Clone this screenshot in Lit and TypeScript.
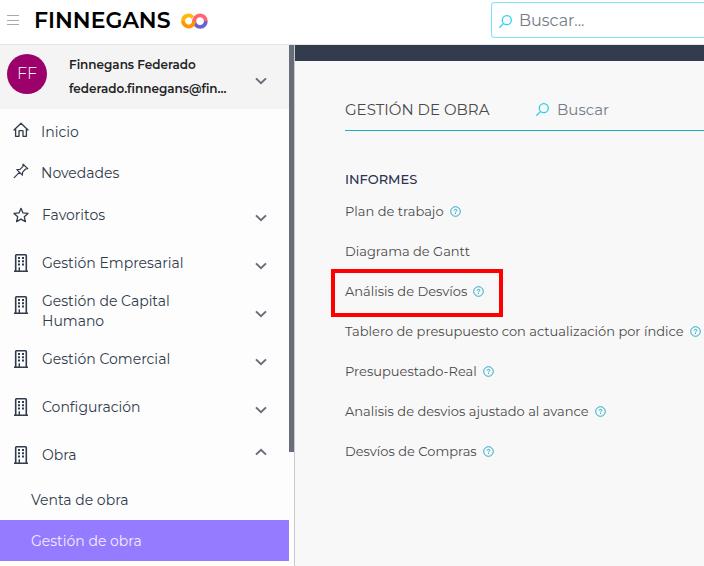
import { LitElement, html, css, svg, nothing } from "lit";
import { customElement } from "lit/decorators.js";
import { classMap } from "lit/directives/class-map.js";

const home = svg`<svg class="icon" width="16" height="16" viewBox="0 0 16 16" fill="none" stroke="currentColor" stroke-width="1.3" stroke-linejoin="round" stroke-linecap="round" aria-hidden="true"><path d="M1 8 L8 1.2 L15 8 M2.6 6.8 V14.3 H6 V9.2 Q6 8.6 6.6 8.6 H9.4 Q10 8.6 10 9.2 V14.3 H13.4 V6.8"/></svg>`;
const pin = svg`<svg class="icon" width="16" height="16" viewBox="0 0 16 16" fill="none" stroke="currentColor" stroke-width="1.2" stroke-linejoin="round" stroke-linecap="round" aria-hidden="true"><path d="M10 1.2 L14.8 5.6 L12.6 6 L9.6 9.2 L9.4 12.2 L3.8 6.6 L7 6.4 L10 3.4 Z M6.4 9.4 L1.2 14.6"/></svg>`;
const star = svg`<svg class="icon" width="16" height="16" viewBox="0 0 16 16" fill="none" stroke="currentColor" stroke-width="1.3" stroke-linejoin="round" aria-hidden="true"><path d="M8 1.3 L10 5.9 L15 6.4 L11.3 9.8 L12.4 14.6 L8 12.1 L3.6 14.6 L4.7 9.8 L1 6.4 L6 5.9 Z"/></svg>`;
const building = svg`<svg class="icon" width="16" height="18" viewBox="0 0 16 18" aria-hidden="true"><path d="M1 17.2 H15 M2.7 17 V1.6 Q2.7 .8 3.5 .8 H12.5 Q13.3 .8 13.3 1.6 V17" fill="none" stroke="currentColor" stroke-width="1.6"/><path d="M5 3h2v2H5z M9 3h2v2H9z M5 6.2h2v2H5z M9 6.2h2v2H9z M5 9.4h2v2H5z M9 9.4h2v2H9z M5.6 13.2h1.4v4H5.6z" fill="currentColor"/></svg>`;

const chevron = (up = false) => svg`<svg class="chevron ${up ? "up" : ""}" width="12" height="8" viewBox="0 0 12 8" fill="none" stroke="currentColor" stroke-width="2" aria-hidden="true"><path d="M1 1.4 L6 6.2 L11 1.4"/></svg>`;
const lens = svg`<svg class="lens" width="13" height="13" viewBox="0 0 13 13" fill="none" stroke="currentColor" stroke-width="1.3" stroke-linecap="round" aria-hidden="true"><circle cx="7.8" cy="5.2" r="4.5"/><path d="M4.4 8.6 L.8 12.2"/></svg>`;
const help = svg`<svg width="11" height="11" viewBox="0 0 11 11" fill="none" stroke="currentColor" stroke-width="1" aria-hidden="true"><circle cx="5.5" cy="5.5" r="4.8"/><path d="M4.2 4.6 Q4.3 3.4 5.5 3.4 Q6.8 3.4 6.8 4.4 Q6.8 5.1 6 5.4 Q5.5 5.6 5.5 6.3 M5.5 7.1 V8"/></svg>`;

interface Entry {
  label: string;
  icon: unknown;
  tall?: boolean;
  open?: boolean;
}

const shortcuts: Entry[] = [
  { label: "Inicio", icon: home },
  { label: "Novedades", icon: pin },
];

const groups: Entry[] = [
  { label: "Favoritos", icon: star },
  { label: "Gestión Empresarial", icon: building },
  { label: "Gestión de Capital Humano", icon: building, tall: true },
  { label: "Gestión Comercial", icon: building },
  { label: "Configuración", icon: building },
  { label: "Obra", icon: building, open: true },
];

const reports = [
  { label: "Plan de trabajo", help: true },
  { label: "Diagrama de Gantt", help: false },
  { label: "Análisis de Desvíos", help: true, marked: true },
  { label: "Tablero de presupuesto con actualización por índice", help: true },
  { label: "Presupuestado-Real", help: true },
  { label: "Analisis de desvios ajustado al avance", help: true },
  { label: "Desvíos de Compras", help: true },
];

const base = css`
  :host, * { box-sizing: border-box; }
  button { font: inherit; color: inherit; background: none; border: 0; padding: 0; text-align: left; cursor: pointer; }
  a { color: inherit; text-decoration: none; }
  input { font: inherit; color: inherit; background: none; border: 0; padding: 0; outline: 0; min-width: 0; flex: 1; }
  input::placeholder { color: #747c88; opacity: 1; }
  svg { flex: none; display: block; }
  ul { list-style: none; margin: 0; padding: 0; }
`;

@customElement("top-bar")
export class TopBar extends LitElement {
  static styles = [base, css`
    :host { display: grid; grid-template-columns: 491px minmax(0, 1fr); height: 45px; background: #fff; border-bottom: 1px solid #e6e6e6; }
    .brand { display: flex; align-items: center; padding: 0 0 3px 7px; }
    .menu { color: #a9a9a9; margin-right: 15px; }
    .name { font-size: 22px; font-weight: 600; line-height: 28px; color: #000; }
    .rings { margin-left: 10px; }
    .search { display: flex; align-items: center; gap: 7px; height: 36px; margin-top: 2px; padding-left: 7px; border: 1px solid #7de3f8; border-right: 0; border-radius: 4px 0 0 4px; font-size: 16px; color: #747c88; }
    .lens { color: #2bcdf0; margin-top: 2px; }
  `];
  render() {
    return html`
      <div class="brand">
        <button class="menu" aria-label="Menú">
          <svg width="12" height="12" viewBox="0 0 12 12" fill="currentColor"><path d="M0 0h12v1H0z M0 5h12v1H0z M0 9h12v1H0z"/></svg>
        </button>
        <span class="name">FINNEGANS</span>
        <svg class="rings" width="27" height="16" viewBox="0 0 27 16" fill="none" stroke-width="3.8" aria-hidden="true">
          <path d="M2 8 A5.6 5.6 0 0 1 11.8 4.4" stroke="#ffb90a"/>
          <path d="M13.4 8.4 A5.6 5.6 0 0 0 24.8 8" stroke="#6a62d2"/>
          <path d="M2 8 A5.6 5.6 0 0 0 11.4 12 C13 10.6 12.6 9.4 13.6 7" stroke="#ff9500"/>
          <path d="M13.2 8.4 A5.7 5.7 0 1 1 24.8 8" stroke="#ff6670"/>
        </svg>
      </div>
      <label class="search">${lens}<input type="search" placeholder="Buscar..." aria-label="Buscar" /></label>
    `;
  }
}

@customElement("side-nav")
export class SideNav extends LitElement {
  static styles = [base, css`
    :host { display: flex; background: #fdfdfd; border-right: 1px solid #c9c9cb; color: #303b4b; font-size: 14px; line-height: 20px; }
    .content { flex: 1; min-width: 0; }
    .thumb { width: 5px; height: 407px; background: #676e79; }
    .user { display: flex; align-items: center; width: 100%; height: 64px; padding: 0 22px 0 7px; background: #f4f4f4; }
    .avatar { display: grid; place-items: center; flex: none; width: 40px; height: 40px; margin: 0 22px 6px 0; border-radius: 50%; background: #9c006b; color: #fff; font-size: 16px; font-weight: 300; }
    .who { flex: none; width: 164px; font-size: 12px; font-weight: 600; line-height: 24px; color: #222; }
    .who span { display: block; overflow: hidden; text-overflow: ellipsis; white-space: nowrap; }
    .chevron { margin: 5px 0 0 auto; color: #676e79; }
    .user .chevron { margin-top: 7px; }
    .chevron.up { transform: rotate(180deg); margin-top: 0; margin-bottom: 7px; }
    .shortcuts { padding-top: 2px; }
    .link { display: flex; align-items: center; gap: 12px; height: 41px; padding-left: 13px; }
    .link .icon { margin-bottom: 4px; }
    .shortcuts li + li { margin-bottom: -2px; }
    .group { display: flex; align-items: center; gap: 13px; width: 100%; height: 48px; padding: 0 22px 0 13px; }
    .label { max-width: 160px; }
    .tall .icon { margin-bottom: 12px; }
    .child { display: flex; align-items: center; height: 41px; padding-left: 31px; }
    .current { background: #957bff; color: #f1edff; }
  `];
  render() {
    return html`
      <div class="content">
        <button class="user">
          <span class="avatar">FF</span>
          <span class="who"><span>Finnegans Federado</span><span>federado.finnegans@fin...</span></span>
          ${chevron()}
        </button>
        <nav>
          <ul class="shortcuts">
            ${shortcuts.map((s) => html`<li><a class="link" href="#">${s.icon}<span>${s.label}</span></a></li>`)}
          </ul>
          <ul>
            ${groups.map((g) => html`<li>
              <button class=${classMap({ group: true, tall: !!g.tall })} aria-expanded=${g.open ? "true" : "false"}>
                ${g.icon}<span class="label">${g.label}</span>${chevron(g.open)}
              </button>
              ${g.open ? html`<ul>
                <li><a class="child" href="#">Venta de obra</a></li>
                <li><a class="child current" href="#" aria-current="page">Gestión de obra</a></li>
              </ul>` : nothing}
            </li>`)}
          </ul>
        </nav>
      </div>
      <div class="thumb"></div>
    `;
  }
}

@customElement("report-list")
export class ReportList extends LitElement {
  static styles = [base, css`
    :host { display: block; min-width: 0; background: #f8f8f8; border-top: 16px solid #323c4e; color: #4a4a4a; font-size: 13px; }
    .panel { padding: 28px 0 0 50px; }
    .head { display: flex; align-items: center; height: 42px; border-bottom: 1px solid #22abc6; }
    h1 { flex: none; width: 191px; margin: 0; font-size: 15px; font-weight: 400; line-height: 20px; color: #4a4a4a; }
    .filter { display: flex; flex: 1; align-items: center; gap: 8px; min-width: 0; font-size: 15px; color: #747c88; }
    .lens { color: #2bcdf0; }
    h2 { margin: 38px 0 2px; font-size: 13px; font-weight: 500; line-height: 20px; color: #2b3252; }
    li { display: flex; }
    .item { position: relative; display: flex; align-items: center; gap: 6px; height: 40px; white-space: nowrap; }
    .help { color: #22abc6; }
    .marked::after { content: ""; position: absolute; inset: -2px -19px -6px -14px; border: 4px solid #f00; pointer-events: none; }
  `];
  render() {
    return html`
      <div class="panel">
        <div class="head">
          <h1>GESTIÓN DE OBRA</h1>
          <label class="filter">${lens}<input type="search" placeholder="Buscar" aria-label="Buscar informe" /></label>
        </div>
        <h2>INFORMES</h2>
        <ul>
          ${reports.map((r) => html`<li><div class=${classMap({ item: true, marked: !!r.marked })}>
            <a href="#">${r.label}</a>
            ${r.help ? html`<button class="help" aria-label="Ayuda">${help}</button>` : nothing}
          </div></li>`)}
        </ul>
      </div>
    `;
  }
}

@customElement("app-root")
export class AppRoot extends LitElement {
  static styles = css`
    :host { display: flex; flex-direction: column; min-height: 100vh; font-family: Montserrat, Inter, "Open Sans", sans-serif; }
    .body { display: grid; grid-template-columns: 295px minmax(0, 1fr); flex: 1; }
  `;
  render() {
    return html`<top-bar></top-bar><div class="body"><side-nav></side-nav><report-list></report-list></div>`;
  }
}
